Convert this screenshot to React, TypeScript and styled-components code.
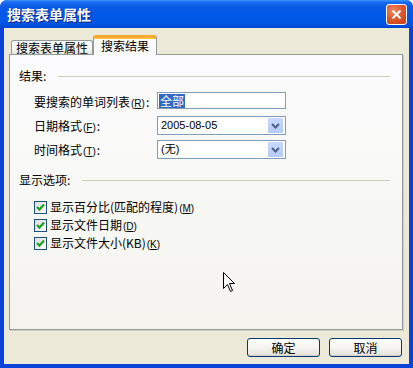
import React from "react";
import styled, { createGlobalStyle } from "styled-components";

const Global = createGlobalStyle`
  html, body { margin: 0; padding: 0; background: #ffffff; }
  body { font-family: "Noto Sans CJK SC", "Liberation Sans", sans-serif; }
  * { box-sizing: border-box; }
`;

const Window = styled.div`
  position: relative;
  width: 413px;
  height: 368px;
  display: flex;
  flex-direction: column;
  background: #0842d6;
  border-radius: 7px 7px 0 0;
  overflow: hidden;
`;

const TitleBar = styled.div`
  height: 28px;
  flex: none;
  display: flex;
  align-items: center;
  justify-content: space-between;
  padding: 0 6px 1px 7px;
  background: linear-gradient(
    to bottom,
    #3d95ff 0%,
    #1a6cf2 8%,
    #0a5ae6 25%,
    #0058e8 60%,
    #0054e3 85%,
    #0046d0 100%
  );
`;

const Title = styled.span`
  color: #ffffff;
  font-family: "Noto Sans CJK SC", sans-serif;
  font-weight: 700;
  font-size: 14px;
  line-height: 16px;
  text-shadow: 1px 1px 0 #0a1f80;
  margin-top: 1px;
`;

const CloseButton = styled.div`
  width: 21px;
  height: 21px;
  border: 1px solid #ffffff;
  border-radius: 3px;
  background: radial-gradient(circle at 35% 30%, #f08a66 0%, #e2582f 45%, #c63d13 100%);
  display: flex;
  align-items: center;
  justify-content: center;
  margin-top: 2px;
`;

const Body = styled.div`
  flex: 1;
  margin: 0 4px 4px 4px;
  background: #ece9d8;
  display: flex;
  flex-direction: column;
  padding: 7px 6px 7px 5px;
`;

const TabStrip = styled.div`
  height: 19px;
  flex: none;
  display: flex;
  align-items: flex-end;
  padding-left: 2px;
  position: relative;
  z-index: 1;
`;

const Tab = styled.div<{ $active?: boolean }>`
  font-size: 12px;
  line-height: 13px;
  color: #000;
  border: 1px solid #919b9c;
  border-radius: 3px 3px 0 0;
  ${(p) =>
    p.$active
      ? `
    height: 20px;
    margin-bottom: -1px;
    border-bottom: none;
    border-top: 3px solid #f6a830;
    box-shadow: inset 0 1px 0 #ffc73c;
    background: #fcfcfe;
    padding: 1px 7px 0 7px;
  `
      : `
    height: 14px;
    border-bottom: none;
    background: linear-gradient(to bottom, #ffffff, #f3f3ef 70%, #e6e5dd);
    padding: 0 4px 0 4px;
  `}
`;

const Panel = styled.div`
  flex: 1;
  border: 1px solid #919b9c;
  box-shadow: 1px 1px 0 #d0cebf;
  background: linear-gradient(to bottom, #fcfcfe 0%, #f7f7f4 60%, #f4f3ee 100%);
  padding: 15px 12px 0 9px;
  display: flex;
  flex-direction: column;
`;

const SectionHeader = styled.div<{ $gap: number; $top?: number }>`
  display: flex;
  align-items: center;
  gap: ${(p) => p.$gap}px;
  margin-top: ${(p) => p.$top ?? 0}px;
  font-size: 12px;
  line-height: 12px;
  height: 12px;
  color: #000;
`;

const Rule = styled.div`
  flex: 1;
  height: 1px;
  background: #d0d0bf;
`;

const FieldGrid = styled.div`
  display: grid;
  grid-template-columns: 123px 129px;
  grid-auto-rows: 19px;
  row-gap: 5px;
  margin: 10px 0 0 15px;
`;

const Label = styled.div`
  font-size: 12px;
  line-height: 19px;
  color: #000;
  white-space: nowrap;
`;

const Key = styled.span`
  font-family: "Liberation Sans", sans-serif;
  font-size: 10px;
  margin: 0 1px;
`;

const TextInput = styled.div`
  height: 17px;
  border: 1px solid #7f9db9;
  background: #ffffff;
  padding: 1px 1px;
  display: flex;
  align-items: center;
`;

const Selected = styled.span`
  background: #316ac5;
  color: #ffffff;
  font-size: 12px;
  line-height: 14px;
  padding: 0 1px;
`;

const Combo = styled.div`
  height: 19px;
  border: 1px solid #7f9db9;
  background: #ffffff;
  display: flex;
  align-items: center;
  justify-content: space-between;
  padding: 0 2px 0 3px;
`;

const ComboText = styled.span`
  font-family: "Liberation Sans", "Noto Sans CJK SC", sans-serif;
  font-size: 11px;
  line-height: 13px;
  color: #000;
`;

const DropButton = styled.div`
  width: 15px;
  height: 15px;
  border-radius: 1px;
  background: linear-gradient(to bottom, #c9daff, #b6caf6);
  display: flex;
  align-items: center;
  justify-content: center;
`;

const CheckList = styled.div`
  display: flex;
  flex-direction: column;
  gap: 5px;
  margin: 15px 0 0 15px;
`;

const CheckRow = styled.div`
  display: flex;
  align-items: center;
  gap: 3px;
  height: 13px;
  font-size: 12px;
  line-height: 13px;
  color: #000;
`;

const CheckBox = styled.div`
  width: 13px;
  height: 13px;
  border: 1px solid #1c5180;
  background: linear-gradient(135deg, #dcdcd7, #ffffff);
  display: flex;
  align-items: center;
  justify-content: center;
  flex: none;
`;

const ButtonRow = styled.div`
  display: flex;
  justify-content: flex-end;
  gap: 9px;
  margin-top: 8px;
  padding-right: 1px;
`;

const Button = styled.div`
  width: 73px;
  height: 19px;
  border: 1px solid #003c74;
  border-radius: 3px;
  background: linear-gradient(to bottom, #ffffff 0%, #f4f4f0 50%, #e3e1d8 100%);
  box-shadow: inset 0 -1px 0 #d6d0c5;
  display: flex;
  align-items: center;
  justify-content: center;
  font-size: 12px;
  line-height: 13px;
  color: #000;
`;

const Cursor = styled.svg`
  position: absolute;
  left: 223px;
  top: 272px;
`;

const Chevron = () => (
  <svg width="9" height="6" viewBox="0 0 9 6">
    <path d="M1 1 L4.5 4.5 L8 1" fill="none" stroke="#4d6185" strokeWidth="2" />
  </svg>
);

const Check = () => (
  <svg width="9" height="9" viewBox="0 0 9 9">
    <path d="M1 4 L3.5 6.5 L8 1.5" fill="none" stroke="#21a121" strokeWidth="2.3" />
  </svg>
);

const K = ({ k }: { k: string }) => (
  <Key>
    (<u>{k}</u>)
  </Key>
);

export default function App() {
  return (
    <>
      <Global />
      <Window>
        <TitleBar>
          <Title>搜索表单属性</Title>
          <CloseButton>
            <svg width="11" height="11" viewBox="0 0 11 11">
              <path d="M1.5 1.5 L9.5 9.5 M9.5 1.5 L1.5 9.5" stroke="#ffffff" strokeWidth="2" />
            </svg>
          </CloseButton>
        </TitleBar>
        <Body>
          <TabStrip>
            <Tab>搜索表单属性</Tab>
            <Tab $active>搜索结果</Tab>
          </TabStrip>
          <Panel>
            <SectionHeader $gap={12}>
              <span>结果:</span>
              <Rule />
            </SectionHeader>
            <FieldGrid>
              <Label>
                要搜索的单词列表<K k="R" />:
              </Label>
              <TextInput>
                <Selected>全部</Selected>
              </TextInput>
              <Label>
                日期格式<K k="F" />:
              </Label>
              <Combo>
                <ComboText>2005-08-05</ComboText>
                <DropButton>
                  <Chevron />
                </DropButton>
              </Combo>
              <Label>
                时间格式<K k="T" />:
              </Label>
              <Combo>
                <ComboText>(无)</ComboText>
                <DropButton>
                  <Chevron />
                </DropButton>
              </Combo>
            </FieldGrid>
            <SectionHeader $gap={12} $top={15}>
              <span>显示选项:</span>
              <Rule />
            </SectionHeader>
            <CheckList>
              <CheckRow>
                <CheckBox>
                  <Check />
                </CheckBox>
                <span>
                  显示百分比(匹配的程度)<K k="M" />
                </span>
              </CheckRow>
              <CheckRow>
                <CheckBox>
                  <Check />
                </CheckBox>
                <span>
                  显示文件日期<K k="D" />
                </span>
              </CheckRow>
              <CheckRow>
                <CheckBox>
                  <Check />
                </CheckBox>
                <span>
                  显示文件大小(KB)<K k="K" />
                </span>
              </CheckRow>
            </CheckList>
          </Panel>
          <ButtonRow>
            <Button>确定</Button>
            <Button>取消</Button>
          </ButtonRow>
        </Body>
        <Cursor width="13" height="21" viewBox="0 0 13 21">
          <path
            d="M0.5 0.5 L0.5 16.5 L4.5 12.5 L7.5 19.5 L9.5 18.5 L6.5 11.5 L11.5 11.5 Z"
            fill="#ffffff"
            stroke="#000000"
            strokeWidth="1"
          />
        </Cursor>
      </Window>
    </>
  );
}
